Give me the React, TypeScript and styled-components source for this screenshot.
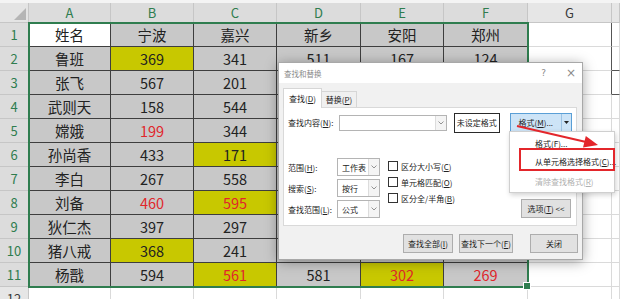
import React from 'react';
import styled, { createGlobalStyle, css } from 'styled-components';

const GlobalStyle = createGlobalStyle`
  html, body { margin: 0; padding: 0; background: #fff; }
  body { font-family: "Noto Sans CJK SC", "Noto Sans", sans-serif; }
  * { box-sizing: border-box; }
`;

const GREEN = '#2f7d4f';
const RED = '#e0262b';

const Page = styled.div`
  position: relative;
  width: 620px;
  height: 299px;
  overflow: hidden;
  background: #fff;
`;

const TopStrip = styled.div`
  height: 3px;
  background: #f4f4f4;
`;

const SheetWrap = styled.div`
  position: relative;
`;

const Sheet = styled.div`
  display: grid;
  grid-template-columns: 29px 82px 83px 83px 84px 83px 84px 84px 1fr;
  grid-template-rows: 20px repeat(12, 24px);
  font-family: "Noto Sans CJK SC", "Noto Sans", sans-serif;
`;

const Corner = styled.div`
  position: relative;
  background: #e4e4e4;
  border-right: 1px solid #c6c6c6;
  border-bottom: 1px solid #c6c6c6;
  &::after {
    content: '';
    position: absolute;
    right: 2px;
    bottom: 2px;
    width: 0;
    height: 0;
    border-left: 12px solid transparent;
    border-bottom: 12px solid #b5b5b5;
  }
`;

const ColHeader = styled.div<{ $sel?: boolean }>`
  display: flex;
  align-items: center;
  justify-content: center;
  font-size: 13px;
  background: ${p => (p.$sel ? '#dcdcdc' : '#e6e6e6')};
  color: ${p => (p.$sel ? GREEN : '#3a3a3a')};
  border-right: 1px solid #c6c6c6;
  border-bottom: 1px solid #c6c6c6;
`;

const RowHeader = styled.div<{ $sel?: boolean }>`
  display: flex;
  align-items: center;
  justify-content: center;
  font-size: 13px;
  background: ${p => (p.$sel ? '#dcdcdc' : '#e6e6e6')};
  color: ${p => (p.$sel ? GREEN : '#3a3a3a')};
  border-right: 1px solid #c6c6c6;
  border-bottom: 1px solid #c6c6c6;
`;

const DataCell = styled.div<{ $fill: 'white' | 'gray' | 'yellow'; $red?: boolean }>`
  display: flex;
  align-items: center;
  justify-content: center;
  font-size: 14.5px;
  color: ${p => (p.$red ? RED : '#222')};
  background: ${p => (p.$fill === 'white' ? '#fff' : p.$fill === 'yellow' ? '#c8c800' : '#c8c8c8')};
  border-right: 1px solid #3e3e3e;
  border-bottom: 1px solid #3e3e3e;
`;

const EmptyCell = styled.div<{ $rightDark?: boolean; $bottomDark?: boolean }>`
  background: #fff;
  border-right: 1px solid ${p => (p.$rightDark ? '#555' : '#dadada')};
  border-bottom: 1px solid ${p => (p.$bottomDark ? '#555' : '#dadada')};
`;

const Selection = styled.div`
  position: absolute;
  left: 28px;
  top: 19px;
  width: 501px;
  height: 266px;
  border: 2px solid ${GREEN};
  pointer-events: none;
  &::after {
    content: '';
    position: absolute;
    right: -4px;
    bottom: -4px;
    width: 6px;
    height: 6px;
    background: ${GREEN};
    border: 1px solid #fff;
  }
`;

/* ---------- Dialog ---------- */

const Dialog = styled.div`
  position: absolute;
  left: 278px;
  top: 62px;
  width: 305px;
  height: 198px;
  background: #f1f1f1;
  border: 1px solid #a8a8a8;
  box-shadow: 0 2px 12px rgba(0, 0, 0, 0.35);
  display: flex;
  flex-direction: column;
  font-family: "Noto Sans CJK SC", "Noto Sans", sans-serif;
  font-size: 8px;
  color: #222;
  u { text-decoration: underline; text-underline-offset: 1px; }
`;

const TitleBar = styled.div`
  height: 20px;
  background: #fff;
  display: flex;
  align-items: center;
  padding: 0 6px 0 5px;
  color: #8a8a8a;
  font-size: 7.5px;
`;

const TitleText = styled.span`
  flex: 1;
`;

const TitleIcon = styled.span<{ $gap?: number }>`
  color: #8a8a8a;
  font-size: ${p => (p.$gap ? 12 : 9)}px;
  margin-left: ${p => p.$gap ?? 0}px;
  line-height: 1;
  font-family: "DejaVu Sans", sans-serif;
`;

const TabsRow = styled.div`
  display: flex;
  align-items: flex-end;
  margin-top: 5px;
  padding-left: 4px;
  height: 19px;
  position: relative;
  z-index: 1;
`;

const Tab = styled.div<{ $active?: boolean }>`
  display: flex;
  align-items: center;
  justify-content: center;
  border: 1px solid #d6d6d6;
  border-bottom: none;
  ${p =>
    p.$active
      ? css`
          width: 39px;
          height: 20px;
          margin-bottom: -1px;
          background: #fff;
        `
      : css`
          width: 35px;
          height: 16px;
          background: #f0f0f0;
          border-left: none;
        `}
`;

const Panel = styled.div`
  margin: 0 5px 0 4px;
  height: 119px;
  background: #fff;
  border: 1px solid #d9d9d9;
  padding: 4px 4px 0 4px;
  display: flex;
  flex-direction: column;
`;

const FindRow = styled.div`
  display: flex;
  align-items: center;
  height: 21px;
`;

const Label = styled.span<{ $w: number }>`
  width: ${p => p.$w}px;
  flex: none;
  white-space: nowrap;
`;

const Combo = styled.div<{ $w: number; $h: number }>`
  width: ${p => p.$w}px;
  height: ${p => p.$h}px;
  border: 1px solid #b4b4b4;
  background: #fff;
  display: flex;
  align-items: stretch;
  flex: none;
`;

const ComboText = styled.span`
  flex: 1;
  display: flex;
  align-items: center;
  padding-left: 4px;
`;

const ComboArrow = styled.span`
  width: 11px;
  display: flex;
  align-items: center;
  justify-content: center;
  background: #f4f4f4;
  border-left: 1px solid #dcdcdc;
`;

const NoFormatBox = styled.div`
  margin-left: 7px;
  width: 46px;
  height: 20px;
  border: 1.5px solid #2a2a2a;
  display: flex;
  align-items: center;
  justify-content: center;
  white-space: nowrap;
`;

const SplitButton = styled.div`
  margin-left: 10px;
  width: 63px;
  height: 19px;
  background: #cde4f7;
  border: 1px solid #5a9fd6;
  display: flex;
  align-items: stretch;
`;

const SplitMain = styled.span`
  flex: 1;
  display: flex;
  align-items: center;
  justify-content: center;
  white-space: nowrap;
`;

const SplitArrow = styled.span`
  width: 10px;
  display: flex;
  align-items: center;
  justify-content: center;
  border-left: 1px solid #9cc3e4;
`;

const OptionsArea = styled.div`
  display: flex;
  margin-top: 25px;
  align-items: flex-end;
`;

const SelectCol = styled.div`
  display: flex;
  flex-direction: column;
  gap: 3px;
`;

const SelectRow = styled.div`
  display: flex;
  align-items: center;
`;

const CheckCol = styled.div`
  display: flex;
  flex-direction: column;
  margin-left: 8px;
  align-self: flex-start;
`;

const CheckRow = styled.div`
  height: 16px;
  display: flex;
  align-items: center;
  white-space: nowrap;
`;

const CheckBox = styled.span`
  width: 10px;
  height: 10px;
  border: 1px solid #333;
  background: #fff;
  margin-right: 3px;
  flex: none;
`;

const Button = styled.div<{ $w: number; $ml?: number }>`
  width: ${p => p.$w}px;
  height: 19px;
  margin-left: ${p => p.$ml ?? 0}px;
  background: #e1e1e1;
  border: 1px solid #adadad;
  display: flex;
  align-items: center;
  justify-content: center;
  white-space: nowrap;
  flex: none;
`;

const OptionsButton = styled(Button)`
  margin-left: auto;
  margin-right: 1px;
`;

const BottomRow = styled.div`
  display: flex;
  justify-content: flex-end;
  margin-top: 8px;
  padding-right: 4px;
`;

/* ---------- Menu ---------- */

const Menu = styled.div`
  position: absolute;
  left: 509px;
  top: 131px;
  width: 106px;
  height: 62px;
  background: #fff;
  border: 1px solid #cfcfcf;
  box-shadow: 1px 2px 5px rgba(0, 0, 0, 0.18);
  display: flex;
  flex-direction: column;
  padding: 3px 0 0 25px;
  font-family: "Noto Sans CJK SC", "Noto Sans", sans-serif;
  font-size: 8px;
  color: #222;
  u { text-decoration: underline; text-underline-offset: 1px; }
`;

const MenuItem = styled.div<{ $disabled?: boolean; $h: number }>`
  height: ${p => p.$h}px;
  display: flex;
  align-items: center;
  white-space: nowrap;
  color: ${p => (p.$disabled ? '#b0b0b0' : '#222')};
`;

const Highlight = styled.div`
  position: absolute;
  left: 519px;
  top: 148px;
  width: 96px;
  height: 23px;
  border: 2px solid #e3262b;
  pointer-events: none;
`;

const ArrowSvg = styled.svg`
  position: absolute;
  left: 505px;
  top: 120px;
  overflow: visible;
`;

const Chevron = () => (
  <svg width="6" height="4" viewBox="0 0 6 4">
    <polyline points="0.5,0.5 3,3 5.5,0.5" fill="none" stroke="#888" strokeWidth="0.9" />
  </svg>
);

const DownTriangle = () => (
  <svg width="5" height="3" viewBox="0 0 5 3">
    <polygon points="0,0 5,0 2.5,3" fill="#222" />
  </svg>
);

type CellSpec = { v: string; y: boolean; r: boolean };
const parse = (s: string): CellSpec => {
  if (/[\u4e00-\u9fff]/.test(s)) return { v: s, y: false, r: false };
  const m = s.match(/^(\d+)(y?)(r?)$/);
  if (!m) return { v: s, y: false, r: false };
  return { v: m[1], y: m[2] === 'y', r: m[3] === 'r' };
};

const raw: string[][] = [
  ['姓名', '宁波', '嘉兴', '新乡', '安阳', '郑州'],
  ['鲁班', '369y', '341', '511', '167', '124'],
  ['张飞', '567', '201', '235', '412', '318'],
  ['武则天', '158', '544', '276', '389', '455'],
  ['嫦娥', '199r', '344', '521', '137', '208'],
  ['孙尚香', '433', '171y', '349', '226', '571'],
  ['李白', '267', '558', '183', '467', '392'],
  ['刘备', '460r', '595yr', '318', '254', '146'],
  ['狄仁杰', '397', '297', '442', '581', '233'],
  ['猪八戒', '368y', '241', '165', '372', '498'],
  ['杨戬', '594', '561yr', '581', '302yr', '269r'],
];

const cols = ['A', 'B', 'C', 'D', 'E', 'F', 'G', 'H'];

export default function App() {
  const cells: React.ReactNode[] = [];
  cells.push(<Corner key="corner" />);
  cols.forEach((c, i) =>
    cells.push(
      <ColHeader key={'h' + c} $sel={i < 6}>
        {c === 'H' ? '' : c}
      </ColHeader>
    )
  );

  for (let r = 0; r < 12; r++) {
    cells.push(
      <RowHeader key={'r' + r} $sel={r < 11}>
        {r + 1}
      </RowHeader>
    );
    if (r < 11) {
      raw[r].forEach((s, ci) => {
        const spec = parse(s);
        const fill = r === 0 && ci === 0 ? 'white' : spec.y ? 'yellow' : 'gray';
        cells.push(
          <DataCell key={`c${r}-${ci}`} $fill={fill} $red={spec.r}>
            {spec.v}
          </DataCell>
        );
      });
      cells.push(<EmptyCell key={`g${r}`} $rightDark={r < 3} />);
      cells.push(<EmptyCell key={`hh${r}`} $bottomDark={r === 1 || r === 2} />);
    } else {
      for (let ci = 0; ci < 8; ci++) cells.push(<EmptyCell key={`e${r}-${ci}`} />);
    }
  }

  return (
    <>
      <GlobalStyle />
      <Page>
        <TopStrip />
        <SheetWrap>
          <Sheet>{cells}</Sheet>
          <Selection />
        </SheetWrap>

        <Dialog>
          <TitleBar>
            <TitleText>查找和替换</TitleText>
            <TitleIcon>?</TitleIcon>
            <TitleIcon $gap={20}>×</TitleIcon>
          </TitleBar>
          <TabsRow>
            <Tab $active>
              查找(<u>D</u>)
            </Tab>
            <Tab>
              替换(<u>P</u>)
            </Tab>
          </TabsRow>
          <Panel>
            <FindRow>
              <Label $w={51}>
                查找内容(<u>N</u>):
              </Label>
              <Combo $w={108} $h={16}>
                <ComboText />
                <ComboArrow>
                  <Chevron />
                </ComboArrow>
              </Combo>
              <NoFormatBox>未设定格式</NoFormatBox>
              <SplitButton>
                <SplitMain>
                  格式(<u>M</u>)...
                </SplitMain>
                <SplitArrow>
                  <DownTriangle />
                </SplitArrow>
              </SplitButton>
            </FindRow>
            <OptionsArea>
              <SelectCol>
                {[
                  ['范围', 'H', '工作表'],
                  ['搜索', 'S', '按行'],
                  ['查找范围', 'L', '公式'],
                ].map(([l, k, v]) => (
                  <SelectRow key={k}>
                    <Label $w={49}>
                      {l}(<u>{k}</u>):
                    </Label>
                    <Combo $w={43} $h={18}>
                      <ComboText>{v}</ComboText>
                      <ComboArrow>
                        <Chevron />
                      </ComboArrow>
                    </Combo>
                  </SelectRow>
                ))}
              </SelectCol>
              <CheckCol>
                {[
                  ['区分大小写', 'C'],
                  ['单元格匹配', 'O'],
                  ['区分全/半角', 'B'],
                ].map(([l, k]) => (
                  <CheckRow key={k}>
                    <CheckBox />
                    {l}(<u>{k}</u>)
                  </CheckRow>
                ))}
              </CheckCol>
              <OptionsButton $w={50}>
                选项(<u>T</u>) &lt;&lt;
              </OptionsButton>
            </OptionsArea>
          </Panel>
          <BottomRow>
            <Button $w={50}>
              查找全部(<u>I</u>)
            </Button>
            <Button $w={54} $ml={6}>
              查找下一个(<u>F</u>)
            </Button>
            <Button $w={48} $ml={17}>
              关闭
            </Button>
          </BottomRow>
        </Dialog>

        <Menu>
          <MenuItem $h={18}>
            格式(<u>F</u>)...
          </MenuItem>
          <MenuItem $h={18}>
            从单元格选择格式(<u>C</u>)...
          </MenuItem>
          <MenuItem $h={22} $disabled>
            清除查找格式(<u>R</u>)
          </MenuItem>
        </Menu>
        <Highlight />

        <ArrowSvg width="100" height="35" viewBox="0 0 100 35">
          <line x1="12" y1="6" x2="80" y2="21.8" stroke="#e3262b" strokeWidth="2" />
          <polygon points="93,25 78,27.6 80.8,16" fill="#e3262b" />
        </ArrowSvg>
      </Page>
    </>
  );
}
